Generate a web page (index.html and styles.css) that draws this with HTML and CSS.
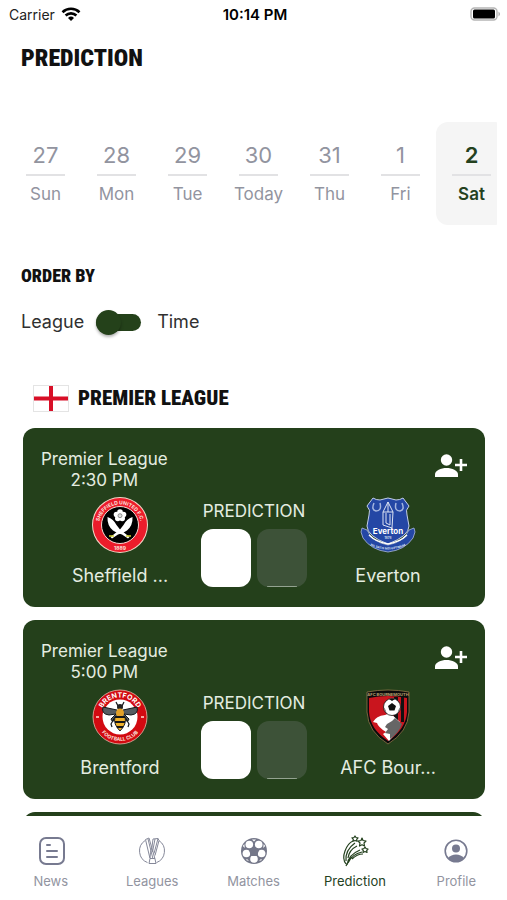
FILE: index.html
```
<!DOCTYPE html>
<html lang="en">
<head>
    <meta charset="UTF-8">
    <meta name="viewport" content="width=device-width, initial-scale=1.0">
    <title>Prediction</title>
    <link rel="stylesheet" href="styles.css">
</head>
<body>
<!-- Status bar -->
<div class="status-bar">
    <div class="carrier">
        <span>Carrier</span>
        <svg width="20" height="14" viewBox="0 0 20 14" fill="none" stroke="#000" stroke-width="2.6">
            <path d="M1.5 5.2a12.3 12.3 0 0 1 17 0"/>
            <path d="M4.6 8.5a7.8 7.8 0 0 1 10.8 0"/>
            <path d="M10 14l-3-3a4.3 4.3 0 0 1 6 0z" fill="#000" stroke="none"/>
        </svg>
    </div>
    <span class="clock">10:14 PM</span>
    <svg class="battery" width="31" height="14" viewBox="0 0 31 14">
        <rect x="1" y="1" width="26" height="12" rx="3.5" fill="#fff" stroke="#b5b5b5" stroke-width="1.4"/>
        <rect x="3" y="2.6" width="22" height="8.8" rx="1.5" fill="#000"/>
        <path d="M28.5 4.5q3 2.5 0 5z" fill="#aaa"/>
    </svg>
</div>

<!-- Content -->
<main class="content">
    <h1>PREDICTION</h1>

    <div class="days">
        <button class="day"><span class="num">27</span><span class="name">Sun</span></button>
        <button class="day"><span class="num">28</span><span class="name">Mon</span></button>
        <button class="day"><span class="num">29</span><span class="name">Tue</span></button>
        <button class="day"><span class="num">30</span><span class="name">Today</span></button>
        <button class="day"><span class="num">31</span><span class="name">Thu</span></button>
        <button class="day"><span class="num">1</span><span class="name">Fri</span></button>
        <button class="day active"><span class="num">2</span><span class="name">Sat</span></button>
    </div>

    <h2>ORDER BY</h2>
    <div class="order">
        <label for="orderSwitch">League</label>
        <input type="checkbox" id="orderSwitch" class="switch">
        <label for="orderSwitch">Time</label>
    </div>

    <div class="league-title">
        <svg width="36" height="27" viewBox="0 0 36 27">
            <rect x="0.5" y="0.5" width="35" height="26" fill="#fff" stroke="#e4e4e4"/>
            <path d="M16 1h4v10.500h15v4H20V26h-4V15.500H1v-4h15z" fill="#d80f27"/>
        </svg>
        <h3>PREMIER LEAGUE</h3>
    </div>

    <div class="matches">
        <article class="card">
            <div class="card-top">
                <p>Premier League<br>2:30 PM</p>
                <button class="invite" aria-label="Invite a friend">
                    <svg width="32" height="24" viewBox="0 0 32 24" fill="#fff">
                        <circle cx="11.500" cy="6" r="5.700"/>
                        <path d="M0 23v-2.500c0-4 6-6.500 11.500-6.500S23 16.500 23 20.500V23z"/>
                        <path d="M24.700 5h2.600v4.700H32v2.600h-4.700V17h-2.600v-4.700H20V9.700h4.700z"/>
                    </svg>
                </button>
            </div>
            <div class="card-body">
                <div class="team">
                    <svg width="56" height="56" viewBox="0 0 56 56">
                        <defs>
                            <path id="sheffieldTop" d="M7.500 33a21 21 0 1 1 41 0"/>
                        </defs>
                        <circle cx="28" cy="28" r="28" fill="#f4d9c8"/>
                        <circle cx="28" cy="28" r="27" fill="#ec1c2b"/>
                        <circle cx="28" cy="28" r="18.500" fill="#000" stroke="#f7d6d0" stroke-width="1"/>
                        <text class="crest-text"><textPath href="#sheffieldTop" startOffset="50%">SHEFFIELD UNITED F.C.</textPath></text>
                        <text x="28" y="53" class="crest-text">1889</text>
                        <g fill="#fff">
                            <circle cx="28" cy="15" r="2.800"/>
                            <circle cx="31.500" cy="17.600" r="2.800"/>
                            <circle cx="30.200" cy="21.500" r="2.800"/>
                            <circle cx="25.800" cy="21.500" r="2.800"/>
                            <circle cx="24.500" cy="17.600" r="2.800"/>
                            <path d="M15.500 20q6 2 9 8 3 5 8 8l5 4-1.500 1.500-6-4q-5-1-9-4-6-5-5.500-13.500z"/>
                            <path d="M40.500 20q-6 2-9 8-3 5-8 8l-5 4 1.500 1.500 6-4q5-1 9-4 6-5 5.500-13.500z"/>
                        </g>
                        <circle cx="28" cy="18.700" r="2" fill="#ddd" stroke="#777" stroke-width="0.800"/>
                        <path d="M17 39h5M34 39h5" stroke="#d3d331" stroke-width="1.500"/>
                    </svg>
                    <span>Sheffield ...</span>
                </div>
                <div class="prediction">
                    <span>PREDICTION</span>
                    <div class="scores">
                        <input type="text" class="score" aria-label="Sheffield score">
                        <input type="text" class="score" aria-label="Everton score" disabled>
                    </div>
                </div>
                <div class="team">
                    <svg width="56" height="56" viewBox="0 0 56 56">
                        <defs>
                            <path id="evertonBottom" d="M9 48q19 9 38 0"/>
                        </defs>
                        <path d="M2 31l5 2q5 12 21 15 16-3 21-15l5-2 1 4-2 6q-8 12-25 14Q11 53 3 41l-2-6z" fill="#2447a5" stroke="#a9b8df" stroke-width="0.800"/>
                        <path d="M13 1q3 2 7 2l8-2 8 2q4 0 7-2l6 8q-4 4-2 9l2 11q0 10-21 18Q7 39 7 29l2-11q2-5-2-9z" fill="#2447a5" stroke="#c3cee9"/>
                        <path d="M9 38q7 7 19 9 12-2 19-9" fill="none" stroke="#fff" stroke-width="1.500"/>
                        <path d="M14 6q-3 7 2 8 6 0 4-8M36 6q-2 8 4 8 5-1 2-8" fill="none" stroke="#a5b6df" stroke-width="1.500"/>
                        <path d="M28 5l-5 10v13l9 3 1-16zM23 15h10M26 16v10l4 2V17M28 5v10" fill="none" stroke="#dce3f3"/>
                        <text x="28" y="37" class="everton-text">Everton</text>
                        <text x="28" y="42" class="motto">1878</text>
                        <text class="motto"><textPath href="#evertonBottom" startOffset="50%">NIL SATIS NISI OPTIMUM</textPath></text>
                    </svg>
                    <span>Everton</span>
                </div>
            </div>
        </article>

        <article class="card">
            <div class="card-top">
                <p>Premier League<br>5:00 PM</p>
                <button class="invite" aria-label="Invite a friend">
                    <svg width="32" height="24" viewBox="0 0 32 24" fill="#fff">
                        <circle cx="11.500" cy="6" r="5.700"/>
                        <path d="M0 23v-2.500c0-4 6-6.500 11.500-6.500S23 16.500 23 20.500V23z"/>
                        <path d="M24.700 5h2.600v4.700H32v2.600h-4.700V17h-2.600v-4.700H20V9.700h4.700z"/>
                    </svg>
                </button>
            </div>
            <div class="card-body">
                <div class="team">
                    <svg width="56" height="56" viewBox="0 0 56 56">
                        <defs>
                            <path id="brentfordTop" d="M8.500 28a19.500 19.500 0 0 1 39 0"/>
                            <path id="brentfordBottom" d="M4 28a24 24 0 0 0 48 0"/>
                        </defs>
                        <circle cx="28" cy="28" r="27" fill="#d20a11" stroke="#e9b7a8" stroke-width="0.800"/>
                        <circle cx="28" cy="28" r="17.500" fill="#fff"/>
                        <text class="brentford-text"><textPath href="#brentfordTop" startOffset="50%">BRENTFORD</textPath></text>
                        <text class="crest-text"><textPath href="#brentfordBottom" startOffset="50%">FOOTBALL CLUB</textPath></text>
                        <path d="M4 28h3M49 28h3" stroke="#f5a9a4" stroke-width="2"/>
                        <path d="M25 21L11 18q-2 7 6 8l7-1-5 5q1 5 7-2M31 21l14-3q2 7-6 8l-7-1 5 5q-1 5-7-2" fill="#555b60" stroke="#15181a"/>
                        <path d="M26 17l-2-4M30 17l2-4M23 28l-4 7 1 3M33 28l4 7-1 3" fill="none" stroke="#15181a" stroke-width="1.200"/>
                        <circle cx="28" cy="18" r="3" fill="#222"/>
                        <ellipse cx="28" cy="24" rx="4" ry="4.500" fill="#e3a128"/>
                        <path d="M23 28h10q2 7-5 14-7-7-5-14z" fill="#eeb12b" stroke="#222"/>
                        <path d="M23 28h10M23 33h10M25 38h6" stroke="#171717" stroke-width="2.200"/>
                    </svg>
                    <span>Brentford</span>
                </div>
                <div class="prediction">
                    <span>PREDICTION</span>
                    <div class="scores">
                        <input type="text" class="score" aria-label="Brentford score">
                        <input type="text" class="score" aria-label="Bournemouth score" disabled>
                    </div>
                </div>
                <div class="team">
                    <svg width="56" height="56" viewBox="0 0 56 56">
                        <path d="M7 3q21-4 42 0v20q-1 20-21 32Q8 43 7 23z" fill="#0b0b0b" stroke="#8e7749" stroke-width="0.800"/>
                        <path d="M9 9q19-4 38 0v14q-1 17-19 29Q10 40 9 23z" fill="#c9151e"/>
                        <path d="M34 8h4v32h-4zM41 8h3v25h-3z" fill="#111"/>
                        <path d="M13 33q3-6 12-7l5-2 10 9q-2 10-11 19l-6-7 3-2q-8-5-9-9z" fill="#fff"/>
                        <path d="M27 35l5-3 3-3 7 6q-3 9-12 15l0-5-5-1 3-4-3-2z" fill="#666"/>
                        <circle cx="32" cy="18" r="8.500" fill="#fff" stroke="#111" stroke-width="0.800"/>
                        <path d="M32 14l4 3-1.500 4.500h-5L28 17zM29 10h6l-3 2zM23.500 18l2 3 1 3zM40.500 18l-2 3-1 3z" fill="#111"/>
                        <text x="28" y="7" class="afc-text">AFC BOURNEMOUTH</text>
                    </svg>
                    <span>AFC Bour...</span>
                </div>
            </div>
        </article>

        <article class="card"></article>
    </div>
</main>

<!-- Bottom navigation -->
<nav class="tabs">
    <a href="#news">
        <svg width="32" height="32" viewBox="0 0 32 32" fill="none" stroke="#777a90" stroke-width="2" stroke-linecap="round">
            <rect x="5" y="3" width="24" height="26" rx="6"/>
            <path d="M12 10h3M12 16h10M12 22h10"/>
        </svg>
        <span>News</span>
    </a>
    <a href="#leagues">
        <svg width="32" height="32" viewBox="0 0 32 32" fill="none" stroke="#858899" stroke-width="1">
            <path d="M9 5.600a12.500 12.500 0 0 0 2.500 22M23 5.600a12.500 12.500 0 0 1-2.500 22"/>
            <path d="M13 28.500h7l-1-4.500M13 28.500l1-5L9.500 4.500 13 3l6 21M12 4l5 20M14 23.500h5M16 12l1-8 5-.5-4 15M19 4l-2.500 13M22 3.500l1 2-4 15M14 23q0-6 2-11"/>
        </svg>
        <span>Leagues</span>
    </a>
    <a href="#matches">
        <svg width="32" height="32" viewBox="0 0 32 32">
            <circle cx="16" cy="16" r="13" fill="#747789"/>
            <g fill="#fff">
                <circle cx="16" cy="24" r="3.800"/>
                <circle cx="8.400" cy="18.500" r="3.800"/>
                <circle cx="11.300" cy="9.500" r="3.800"/>
                <circle cx="20.700" cy="9.500" r="3.800"/>
                <circle cx="23.600" cy="18.500" r="3.800"/>
                <path d="M14 4.500h4l-2 2zM4.800 11l1.500-2 .5 4zM27.200 11l-1.500-2-.5 4zM8 25l1-1 2 2zM24 25l-1-1-2 2z"/>
            </g>
            <path d="M16 11l5 4-2 6h-6l-2-6z" fill="#747789"/>
        </svg>
        <span>Matches</span>
    </a>
    <a href="#prediction" class="active">
        <svg width="32" height="32" viewBox="0 0 32 32" fill="none" stroke="#24411e" stroke-width="1.200" stroke-linejoin="round">
            <path d="M7 29q-4-5-1-13 3-8 8-10M7 26q-1-11 9-18M9 23q1-8 9-12M8 30q1-10 13-15M9 28q4-9 14-11M7 31q3-7 6-9M13 24q5-5 11-5"/>
            <path d="M16 1l1 1.500 2 .3-1.300 1.500.3 2-2-.8-2 .8.300-2L13 2.800l2-.3z"/>
            <path d="M23 3l1 2.500 3 .5-2 2 .5 3-2.500-1.300-2.500 1.300.5-3-2-2 3-.5z"/>
            <path d="M26 12l1 1.500 2 .5-1.300 1.500.3 2-2-1-2 1 .3-2L23 14l2-.5z"/>
        </svg>
        <span>Prediction</span>
    </a>
    <a href="#profile">
        <svg width="32" height="32" viewBox="0 0 32 32">
            <circle cx="16" cy="16" r="10.800" fill="none" stroke="#777a90" stroke-width="1.600"/>
            <circle cx="16" cy="13.500" r="4" fill="#777a90"/>
            <path d="M8 23q3-3.500 8-3.500t8 3.500q-3 4-8 4t-8-4z" fill="#777a90"/>
        </svg>
        <span>Profile</span>
    </a>
</nav>
</body>
</html>
```
FILE: styles.css
```
* {
    box-sizing: border-box;
}

body, h1, h2, h3, p {
    margin: 0;
    padding: 0;
}

body {
    display: flex;
    flex-direction: column;
    height: 100vh;
    font-family: 'Inter', sans-serif;
    background: #fff;
    color: #303030;
    overflow: hidden;
}

button {
    padding: 0;
    border: none;
    background: none;
    font: inherit;
    color: inherit;
    cursor: pointer;
}

svg {
    display: block;
    flex-shrink: 0;
}

h1, h2, h3 {
    font-family: 'Roboto Condensed', 'Roboto', sans-serif;
    font-weight: 900;
    color: #111;
}

/* Status bar */
.status-bar {
    display: grid;
    grid-template-columns: 1fr auto 1fr;
    align-items: center;
    height: 28px;
    padding: 0 6px 0 9px;
    font-size: 14px;
    color: #222;
}

.carrier {
    display: flex;
    align-items: center;
    gap: 6px;
}

.clock {
    font-size: 15px;
    font-weight: 600;
    color: #000;
}

.battery {
    justify-self: end;
}

/* Content */
.content {
    flex: 1;
    min-height: 0;
    overflow: hidden;
}

h1 {
    padding: 14px 21px 0;
    font-size: 24px;
    line-height: 32px;
}

.days {
    display: flex;
    margin: 48px 10px 0;
    overflow: hidden;
}

.day {
    display: flex;
    flex: 0 0 71px;
    flex-direction: column;
    align-items: center;
    height: 103px;
    padding-top: 16px;
    color: #92949f;
}

.day .num {
    width: 39px;
    height: 38px;
    border-bottom: 2px solid #e2e2e4;
    font-size: 22px;
    line-height: 34px;
}

.day .name {
    margin-top: 6px;
    font-size: 17px;
    line-height: 24px;
}

.day.active {
    border-radius: 12px;
    background: #f5f5f5;
    color: #24411e;
    font-weight: 600;
}

h2 {
    padding: 38px 21px 0;
    font-size: 18px;
    line-height: 26px;
}

.order {
    display: flex;
    align-items: center;
    gap: 12px;
    padding: 18px 21px 0;
    font-size: 18px;
    line-height: 30px;
}

.switch {
    appearance: none;
    position: relative;
    width: 45px;
    height: 17px;
    margin: 0 4px 0 0;
    border-radius: 9px;
    background: #24411a;
    cursor: pointer;
}

.switch::before {
    content: '';
    position: absolute;
    top: -4px;
    left: 0;
    width: 25px;
    height: 25px;
    border-radius: 50%;
    background: #24411a;
    box-shadow: 0 2px 3px rgba(0, 0, 0, 0.3);
}

.switch:checked::before {
    left: 20px;
}

.league-title {
    display: flex;
    align-items: center;
    gap: 9px;
    padding: 47px 33px 0;
}

.league-title h3 {
    font-size: 21px;
    line-height: 28px;
}

/* Match cards */
.matches {
    display: flex;
    flex-direction: column;
    gap: 13px;
    padding: 16px 22px 0 23px;
}

.card {
    height: 179px;
    padding: 21px 18px 0;
    border-radius: 12px;
    background: #24401b;
    color: #e4ede1;
}

.card-top {
    display: flex;
    justify-content: space-between;
    align-items: flex-start;
    height: 48px;
    font-size: 17px;
    line-height: 21px;
    text-align: center;
}

.invite {
    margin-top: 5px;
}

.card-body {
    display: flex;
    justify-content: space-between;
    padding: 0 18px;
}

.team {
    display: flex;
    flex-direction: column;
    align-items: center;
    gap: 11px;
    width: 122px;
    font-size: 18px;
    line-height: 24px;
    white-space: nowrap;
}

.prediction {
    display: flex;
    flex-direction: column;
    align-items: center;
    gap: 7px;
    padding-top: 3px;
    font-size: 17px;
    line-height: 22px;
}

.scores {
    display: flex;
    gap: 6px;
}

.score {
    width: 50px;
    height: 58px;
    padding: 0;
    border: none;
    border-radius: 12px;
    background: #fff;
    font: inherit;
    text-align: center;
}

.score:disabled {
    background: #3d5238 linear-gradient(#94a391, #94a391) center bottom / 30px 1px no-repeat;
}

/* Crest lettering */
.crest-text {
    font-size: 5px;
    font-weight: bold;
    fill: #fbe3df;
    text-anchor: middle;
}

.brentford-text {
    font-size: 7px;
    font-weight: bold;
    fill: #fff;
    text-anchor: middle;
}

.everton-text {
    font-size: 8px;
    font-weight: bold;
    fill: #fff;
    text-anchor: middle;
}

.motto {
    font-size: 3px;
    font-weight: bold;
    fill: #dce3f3;
    text-anchor: middle;
}

.afc-text {
    font-size: 4px;
    font-weight: bold;
    fill: #b9a274;
    text-anchor: middle;
}

/* Bottom navigation */
.tabs {
    display: flex;
    height: 84px;
    padding-top: 19px;
    background: #fff;
}

.tabs a {
    display: flex;
    flex: 1;
    flex-direction: column;
    align-items: center;
    gap: 5px;
    font-size: 13px;
    line-height: 18px;
    color: #92949f;
    text-decoration: none;
}

.tabs a.active {
    color: #24411e;
}
```
